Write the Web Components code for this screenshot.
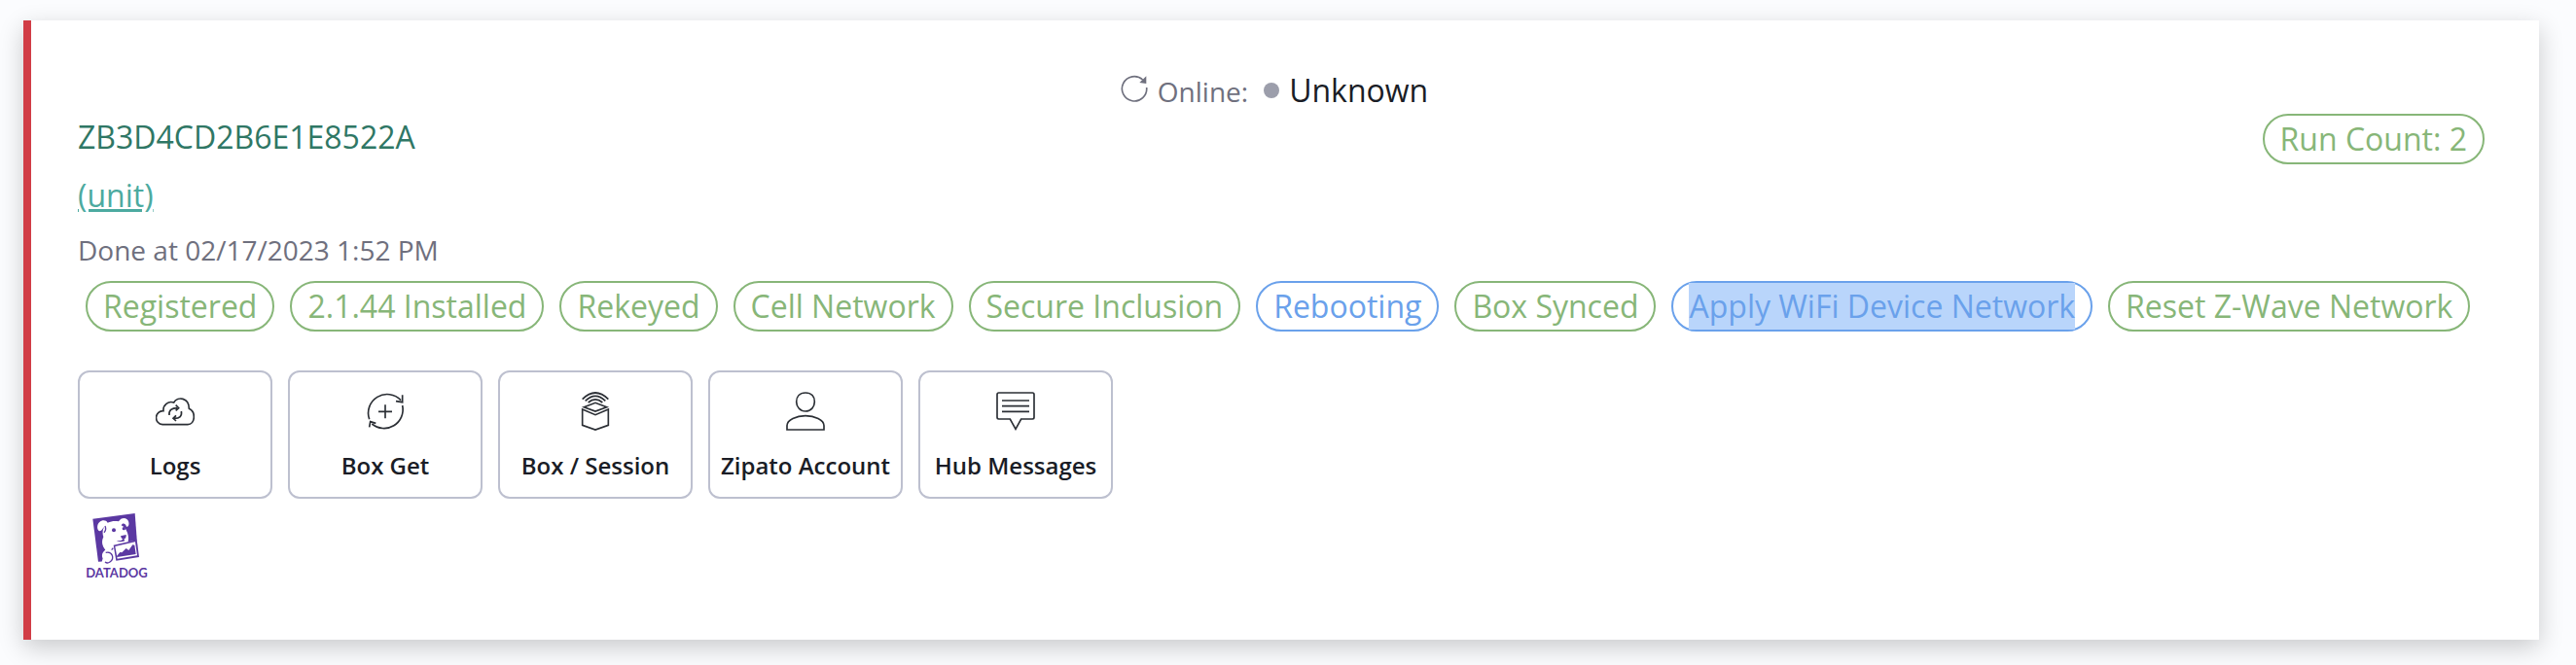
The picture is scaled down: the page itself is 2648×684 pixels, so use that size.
<!DOCTYPE html>
<html lang="en">
<head>
<meta charset="utf-8">
<meta name="viewport" content="width=device-width, initial-scale=1">
<title>Device status</title>
<style>
  body {
    margin: 0;
    background: #fbfcfe;
    color: #1a1d26;
    font: 32px/48px "Open Sans", "Noto Sans", sans-serif;
  }
  device-card { margin: 21px 38px 26px 24px; }
</style>
</head>
<body>
<device-card>
  <online-status slot="status">Unknown</online-status>
  <span slot="serial">ZB3D4CD2B6E1E8522A</span>
  <status-pill slot="count">Run Count: 2</status-pill>
  <unit-link slot="unit" href="#unit">(unit)</unit-link>
  <span slot="done">Done at 02/17/2023 1:52 PM</span>
  <status-pill slot="steps">Registered</status-pill>
  <status-pill slot="steps">2.1.44 Installed</status-pill>
  <status-pill slot="steps">Rekeyed</status-pill>
  <status-pill slot="steps">Cell Network</status-pill>
  <status-pill slot="steps">Secure Inclusion</status-pill>
  <status-pill slot="steps" tone="info">Rebooting</status-pill>
  <status-pill slot="steps">Box Synced</status-pill>
  <status-pill slot="steps" tone="info" highlighted>Apply WiFi Device Network</status-pill>
  <status-pill slot="steps">Reset Z-Wave Network</status-pill>
  <action-tile slot="actions" icon="cloud">Logs</action-tile>
  <action-tile slot="actions" icon="get">Box Get</action-tile>
  <action-tile slot="actions" icon="box">Box / Session</action-tile>
  <action-tile slot="actions" icon="user">Zipato Account</action-tile>
  <action-tile slot="actions" icon="message">Hub Messages</action-tile>
  <datadog-link slot="footer" href="#datadog">DATADOG</datadog-link>
</device-card>

<script>
class BaseElement extends HTMLElement {
  connectedCallback() {
    if (this.shadowRoot) return;
    this.attachShadow({ mode: "open" }).innerHTML = this.render();
  }
}

customElements.define("device-card", class extends BaseElement {
  render() {
    return `
      <style>
        :host {
          display: block;
          padding: 48px;
          border-left: 8px solid #d13d46;
          background: #fff;
          box-shadow: 0 8px 24px rgba(0, 0, 0, .2);
        }
        .status { display: flex; justify-content: center; }
        .head { display: flex; justify-content: space-between; align-items: flex-start; }
        .serial { color: #2f7765; }
        .count { padding-right: 8px; height: 60px; }
        .done { margin: 8px 0; font-size: 28px; color: #6f707e; }
        .steps { display: flex; flex-wrap: wrap; gap: 16px; padding: 0 8px; }
        .actions { display: flex; flex-wrap: wrap; gap: 16px; margin: 40px 0 8px; }
        .footer { display: flex; padding-bottom: 9px; }
      </style>
      <div class="status"><slot name="status"></slot></div>
      <div class="head">
        <div class="serial"><slot name="serial"></slot></div>
        <div class="count"><slot name="count"></slot></div>
      </div>
      <div><slot name="unit"></slot></div>
      <div class="done"><slot name="done"></slot></div>
      <div class="steps"><slot name="steps"></slot></div>
      <div class="actions"><slot name="actions"></slot></div>
      <div class="footer"><slot name="footer"></slot></div>`;
  }
});

customElements.define("online-status", class extends BaseElement {
  render() {
    return `
      <style>
        :host { display: flex; align-items: baseline; padding-right: 22px; }
        button { align-self: center; display: flex; padding: 0; margin-right: 10px; margin-bottom: 4px; border: 0; background: none; color: #6f707e; }
        svg { display: block; width: 28px; height: 28px; }
        .label { font-size: 28px; line-height: 40px; color: #6f707e; }
        .dot { align-self: center; width: 16px; height: 16px; margin: 0 10px 0 16px; border-radius: 50%; background: #9c9eab; }
      </style>
      <button type="button" aria-label="Refresh">
        <svg viewBox="0 0 84 84"><path d="M80 39A38 38 0 1 1 68 15" fill="none" stroke="currentColor" stroke-width="5"/><path d="M79 4v23l-21-3z" fill="currentColor"/></svg>
      </button>
      <span class="label">Online:</span>
      <span class="dot"></span>
      <span><slot></slot></span>`;
  }
});

customElements.define("status-pill", class extends BaseElement {
  render() {
    return `
      <style>
        :host {
          display: block;
          padding: 0 16px;
          border: 2px solid currentColor;
          border-radius: 26px;
          color: #87b678;
          white-space: nowrap;
        }
        :host([tone="info"]) { color: #6aa1eb; }
        span { display: block; }
        :host([highlighted]) span { background: #b9d5fb; }
      </style>
      <span><slot></slot></span>`;
  }
});

customElements.define("unit-link", class extends BaseElement {
  render() {
    return `
      <style>
        :host { display: block; }
        a { color: #4caaa0; text-decoration: underline; }
      </style>
      <a href="${this.getAttribute("href")}"><slot></slot></a>`;
  }
});

const icons = {
  cloud: `<path d="M21 101A20 20 0 0 1 24 59C22 41 39 27 56 33C68 13 103 18 103 52C125 62 122 101 99 101Z"/>
    <path d="M42 72C40 57 50 50 66 50M62 41L71 50L62 58M79 60C82 75 74 82 58 82M63 73L54 82L63 90"/>`,
  get: `<path d="M11 85A58 58 0 0 1 108 26M113 10V32L93 29M113 42A58 58 0 0 1 19 99M11 109L14 92L31 97M60 40V82M39 61H81"/>`,
  box: `<path d="M20 54L60 71L100 54V103L60 117L20 103ZM20 23Q60-17 100 23M29 28Q60-2 91 28M38 33Q60 14 82 33M25 47L60 34L95 47L60 60Z"/>`,
  user: `<path d="M60 3C41 3 32 16 32 31S43 60 60 60S88 47 88 31S79 3 60 3ZM3 117V104C3 86 32 74 60 74S117 86 117 104V117Z"/>`,
  message: `<path d="M8 3H112Q117 3 117 8V79Q117 84 112 84H77L60 115L43 84H8Q3 84 3 79V8Q3 3 8 3ZM18 27H102M18 44H102M18 61H102"/>`
};

customElements.define("action-tile", class extends BaseElement {
  render() {
    return `
      <style>
        :host { display: block; }
        button {
          display: flex;
          flex-direction: column;
          align-items: center;
          justify-content: space-between;
          box-sizing: border-box;
          width: 200px;
          height: 132px;
          padding: 20px 0 14px;
          border: 2px solid #bdc0cf;
          border-radius: 12px;
          background: #fff;
          color: #1a1d26;
          font: 600 24px/36px "Open Sans", "Noto Sans", sans-serif;
          white-space: nowrap;
        }
        svg { width: 40px; height: 40px; fill: none; stroke: #2b2f35; stroke-width: 5; }
      </style>
      <button type="button">
        <svg viewBox="0 0 120 120" aria-hidden="true">${icons[this.getAttribute("icon")]}</svg>
        <span><slot></slot></span>
      </button>`;
  }
});

customElements.define("datadog-link", class extends BaseElement {
  render() {
    return `
      <style>
        :host { display: block; }
        a {
          display: flex;
          flex-direction: column;
          align-items: center;
          box-sizing: border-box;
          width: 80px;
          height: 80px;
          padding-top: 6px;
          color: #5b38a2;
          font: 700 13px/16px Lato, sans-serif;
          text-decoration: none;
        }
        svg { width: 52px; height: 54px; }
      </style>
      <a href="${this.getAttribute("href")}">
        <svg viewBox="74 36 156 162" aria-hidden="true">
          <path fill="currentColor" d="M78 56L208 39L219 183L95 188Z"/>
          <path fill="#fff" d="M99 66C90 72 90 92 99 94C106 94 109 84 113 82C107 92 108 104 111 112C104 126 107 140 117 152C108 158 104 168 109 178L105 192L222 196L221 176L214 122L187 127C190 116 187 101 182 92C179 84 172 79 166 76C170 67 179 70 182 80C190 83 193 67 184 58C176 51 164 54 158 64C148 62 136 62 124 68C119 58 106 59 99 66Z"/>
          <g fill="currentColor">
            <path fill-rule="evenodd" d="M142 137L214 121L221 174L150 185ZM147 141L154 179L215 169L209 127Z"/>
            <path d="M152 171L162 159L168 160L181 147L189 153L201 136L207 137L211 165L153 174Z"/>
            <ellipse cx="143" cy="91" rx="6" ry="6"/><ellipse cx="174" cy="86" rx="5" ry="5"/>
            <path d="M164 109L181 105Q182 117 174 118L177 124Q161 130 151 123Q164 125 171 119Q165 116 164 109Z"/>
          </g>
          <path d="M116 78Q121 90 113 98M118 160C139 155 146 178 131 189Q123 195 116 189M141 146L136 152" fill="none" stroke="currentColor" stroke-width="4"/>
        </svg>
        <span><slot></slot></span>
      </a>`;
  }
});
</script>
</body>
</html>
